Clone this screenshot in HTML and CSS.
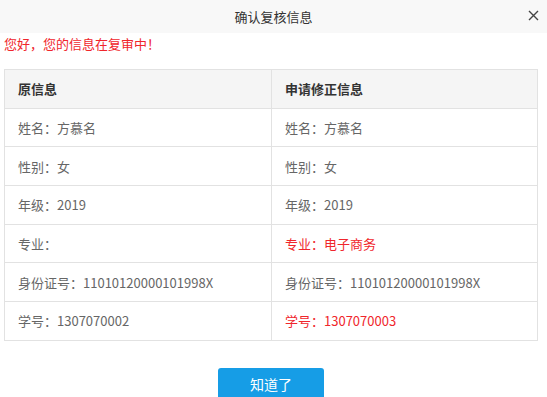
FILE: index.html
```html
<!DOCTYPE html>
<html lang="zh-CN">
<head>
    <meta charset="UTF-8">
    <meta name="viewport" content="width=device-width, initial-scale=1.0">
    <title>确认复核信息</title>
    <link rel="stylesheet" href="styles.css">
</head>
<body>
    <div class="dialog">
        <div class="dialog-header">
            <span class="dialog-title">确认复核信息</span>
            <span class="dialog-close">
                <svg width="11" height="11" viewBox="0 0 11 11">
                    <path d="M1 1L10 10M10 1L1 10" stroke="#444" stroke-width="1.4" fill="none"/>
                </svg>
            </span>
        </div>

        <p class="notice">您好，您的信息在复审中！</p>

        <table class="info-table">
            <thead>
                <tr>
                    <th>原信息</th>
                    <th>申请修正信息</th>
                </tr>
            </thead>
            <tbody>
                <tr>
                    <td>姓名：方慕名</td>
                    <td>姓名：方慕名</td>
                </tr>
                <tr>
                    <td>性别：女</td>
                    <td>性别：女</td>
                </tr>
                <tr>
                    <td>年级：2019</td>
                    <td>年级：2019</td>
                </tr>
                <tr>
                    <td>专业：</td>
                    <td class="changed">专业：电子商务</td>
                </tr>
                <tr>
                    <td>身份证号：11010120000101998X</td>
                    <td>身份证号：11010120000101998X</td>
                </tr>
                <tr>
                    <td>学号：1307070002</td>
                    <td class="changed">学号：1307070003</td>
                </tr>
            </tbody>
        </table>

        <div class="actions">
            <button class="btn-ok">知道了</button>
        </div>
    </div>
</body>
</html>
```

FILE: styles.css
```css
body {
    margin: 0;
    font-family: 'Noto Sans CJK SC', 'Liberation Sans', sans-serif;
    background-color: white;
    overflow: hidden;
}

.dialog {
    width: 547px;
}

.dialog-header {
    position: relative;
    height: 33px;
    background-color: #f8f8f8;
    display: flex;
    justify-content: center;
    align-items: center;
}

.dialog-title {
    font-size: 13px;
    color: #333;
}

.dialog-close {
    position: absolute;
    right: 8px;
    top: 10px;
    width: 11px;
    height: 11px;
    display: flex;
}

.notice {
    margin: 2px 0 0 4px;
    font-size: 13px;
    line-height: 18px;
    color: #f0262c;
}

.info-table {
    margin: 16px 0 0 4px;
    width: 534px;
    border-collapse: collapse;
    font-size: 13px;
}

.info-table th,
.info-table td {
    border: 1px solid #e2e2e2;
    height: 38.7px;
    padding: 0 0 0 13px;
    text-align: left;
    color: #666;
    box-sizing: border-box;
}

.info-table th {
    background-color: #f5f5f5;
    color: #333;
    font-weight: bold;
}

.info-table th:first-child,
.info-table td:first-child {
    width: 267px;
}

.info-table td.changed {
    color: #f0262c;
}

.actions {
    display: flex;
    justify-content: center;
    margin-top: 27px;
    padding-right: 5px;
}

.btn-ok {
    width: 106px;
    height: 32px;
    background-color: #169de6;
    color: white;
    border: none;
    border-radius: 3px;
    font-family: 'Noto Sans CJK SC', 'Liberation Sans', sans-serif;
    font-size: 14px;
    cursor: pointer;
}

.btn-ok:hover {
    background-color: #0f8fd6;
}
```
